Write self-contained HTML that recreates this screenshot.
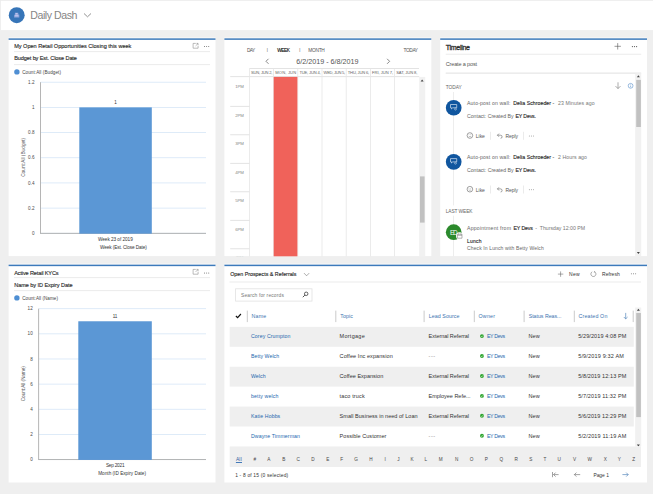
<!DOCTYPE html>
<html><head><meta charset="utf-8"><title>Daily Dash</title>
<style>
*{box-sizing:border-box;margin:0;padding:0}
html,body{width:653px;height:494px;overflow:hidden;background:#efefef;font-family:"Liberation Sans",sans-serif;color:#333}
.t{position:absolute;white-space:pre;line-height:1}
svg{position:absolute;overflow:visible}
</style></head><body>
<svg style="left:0;top:0" width="653" height="494" viewBox="0 0 653 494" font-family="Liberation Sans, sans-serif" xml:space="preserve">
<rect x="0.00" y="0.00" width="653.00" height="30.10" fill="#fff" />
<rect x="0.00" y="0.00" width="653.00" height="0.80" fill="#ececec" />
<rect x="0.00" y="0.00" width="0.80" height="30.00" fill="#ececec" />
<rect x="8.75" y="7.25" width="15.90" height="15.90" fill="#3775b8" rx="7.95" />
<g transform="translate(12.70,11.20)"><path d="M2.2 1.6H5.6V3.4H6.6V6.2H1.4V3.6H2.2Z" fill="#aeb4e8" opacity="0.75"/><path d="M3 2.6H4.8M2.4 4.6H5.6" stroke="#e8e4fa" stroke-width="0.7" fill="none"/></g>
<g transform="translate(83.00,12.50)"><path d="M1 1 L4.5 4.3 L8 1" fill="none" stroke="#777" stroke-width="0.8"/></g>
<rect x="8.60" y="37.10" width="206.90" height="2.00" fill="#f6f6f6" />
<rect x="8.60" y="38.30" width="206.90" height="217.80" fill="#fff" />
<rect x="8.60" y="38.35" width="206.90" height="1.50" fill="#3d7abb" />
<rect x="224.40" y="37.10" width="206.90" height="2.00" fill="#f6f6f6" />
<rect x="224.40" y="38.30" width="206.90" height="217.80" fill="#fff" />
<rect x="224.40" y="38.35" width="206.90" height="1.50" fill="#3d7abb" />
<rect x="440.20" y="37.10" width="206.80" height="2.00" fill="#f6f6f6" />
<rect x="440.20" y="38.30" width="206.80" height="217.80" fill="#fff" />
<rect x="440.20" y="38.35" width="206.80" height="1.50" fill="#3d7abb" />
<rect x="8.60" y="263.30" width="206.90" height="2.00" fill="#f6f6f6" />
<rect x="8.60" y="264.50" width="206.90" height="218.00" fill="#fff" />
<rect x="8.60" y="264.65" width="206.90" height="1.50" fill="#3d7abb" />
<rect x="224.40" y="263.30" width="422.60" height="2.00" fill="#f6f6f6" />
<rect x="224.40" y="264.50" width="422.60" height="218.00" fill="#fff" />
<rect x="224.40" y="264.65" width="422.60" height="1.50" fill="#3d7abb" />
<g transform="translate(192.60,42.90)"><path d="M3.2 0.5H0.5V5.3H5.5V2.8M3 3L5.4 0.6M3.9 0.5H5.5V2.1" fill="none" stroke="#858585" stroke-width="0.55"/></g>
<g transform="translate(203.60,45.50)"><circle cx="0.8999999999999999" cy="1" r="0.55" fill="#777"/><circle cx="3" cy="1" r="0.55" fill="#777"/><circle cx="5.1" cy="1" r="0.55" fill="#777"/></g>
<rect x="14.00" y="51.30" width="196.00" height="0.80" fill="#e6e6e6" />
<rect x="14.00" y="64.30" width="196.00" height="0.80" fill="#e6e6e6" />
<rect x="14.20" y="69.20" width="5.40" height="5.40" fill="#4f8fd3" rx="2.70" />
<rect x="40.50" y="81.80" width="165.50" height="0.80" fill="#d6e6f7" />
<rect x="40.50" y="106.98" width="165.50" height="0.80" fill="#d6e6f7" />
<rect x="40.50" y="132.16" width="165.50" height="0.80" fill="#d6e6f7" />
<rect x="40.50" y="157.34" width="165.50" height="0.80" fill="#d6e6f7" />
<rect x="40.50" y="182.52" width="165.50" height="0.80" fill="#d6e6f7" />
<rect x="40.50" y="207.70" width="165.50" height="0.80" fill="#d6e6f7" />
<rect x="40.50" y="232.88" width="165.50" height="0.80" fill="#d6e6f7" />
<rect x="40.00" y="82.20" width="0.90" height="151.08" fill="#adadad" />
<rect x="40.00" y="232.88" width="166.00" height="0.90" fill="#adadad" />
<rect x="79.30" y="107.38" width="72.50" height="126.30" fill="#5b97d5" />
<g transform="translate(192.60,268.90)"><path d="M3.2 0.5H0.5V5.3H5.5V2.8M3 3L5.4 0.6M3.9 0.5H5.5V2.1" fill="none" stroke="#858585" stroke-width="0.55"/></g>
<g transform="translate(203.60,272.00)"><circle cx="0.8999999999999999" cy="1" r="0.55" fill="#777"/><circle cx="3" cy="1" r="0.55" fill="#777"/><circle cx="5.1" cy="1" r="0.55" fill="#777"/></g>
<rect x="14.00" y="277.30" width="196.00" height="0.80" fill="#e6e6e6" />
<rect x="14.00" y="290.30" width="196.00" height="0.80" fill="#e6e6e6" />
<rect x="14.20" y="295.20" width="5.40" height="5.40" fill="#4f8fd3" rx="2.70" />
<rect x="38.70" y="308.30" width="167.30" height="0.80" fill="#d6e6f7" />
<rect x="38.70" y="333.44" width="167.30" height="0.80" fill="#d6e6f7" />
<rect x="38.70" y="358.58" width="167.30" height="0.80" fill="#d6e6f7" />
<rect x="38.70" y="383.72" width="167.30" height="0.80" fill="#d6e6f7" />
<rect x="38.70" y="408.86" width="167.30" height="0.80" fill="#d6e6f7" />
<rect x="38.70" y="434.00" width="167.30" height="0.80" fill="#d6e6f7" />
<rect x="38.70" y="459.14" width="167.30" height="0.80" fill="#d6e6f7" />
<rect x="38.20" y="308.70" width="0.90" height="150.84" fill="#adadad" />
<rect x="38.20" y="459.14" width="167.80" height="0.90" fill="#adadad" />
<rect x="78.30" y="321.27" width="73.50" height="138.67" fill="#5b97d5" />
<g transform="translate(265.20,58.30)"><path d="M3.3 0.5L0.8 3L3.3 5.5" fill="none" stroke="#555" stroke-width="0.7"/></g>
<g transform="translate(386.40,58.30)"><path d="M0.7 0.5L3.2 3L0.7 5.5" fill="none" stroke="#555" stroke-width="0.7"/></g>
<rect x="249.40" y="68.20" width="169.60" height="0.80" fill="#dcdcdc" />
<rect x="230.20" y="76.30" width="189.00" height="0.80" fill="#dcdcdc" />
<rect x="249.00" y="68.60" width="0.80" height="187.70" fill="#e6e6e6" />
<rect x="273.20" y="68.60" width="0.80" height="187.70" fill="#e6e6e6" />
<rect x="297.40" y="68.60" width="0.80" height="187.70" fill="#e6e6e6" />
<rect x="321.60" y="68.60" width="0.80" height="187.70" fill="#e6e6e6" />
<rect x="345.80" y="68.60" width="0.80" height="187.70" fill="#e6e6e6" />
<rect x="370.00" y="68.60" width="0.80" height="187.70" fill="#e6e6e6" />
<rect x="394.20" y="68.60" width="0.80" height="187.70" fill="#e6e6e6" />
<rect x="273.70" y="76.90" width="23.70" height="179.40" fill="#f0625a" />
<rect x="230.20" y="105.90" width="19.20" height="0.80" fill="#dcdcdc" />
<rect x="230.20" y="134.40" width="19.20" height="0.80" fill="#dcdcdc" />
<rect x="230.20" y="162.90" width="19.20" height="0.80" fill="#dcdcdc" />
<rect x="230.20" y="191.40" width="19.20" height="0.80" fill="#dcdcdc" />
<rect x="230.20" y="219.90" width="19.20" height="0.80" fill="#dcdcdc" />
<rect x="230.20" y="248.40" width="19.20" height="0.80" fill="#dcdcdc" />
<clipPath id="c7"><rect x="230" y="250" width="20" height="6.3"/></clipPath><g clip-path="url(#c7)"><text x="235.4" y="259" font-size="4" fill="#999" letter-spacing="-0.1">7PM</text></g>
<rect x="419.20" y="76.90" width="6.00" height="179.40" fill="#f1f1f1" />
<rect x="420.00" y="176.40" width="4.60" height="46.20" fill="#c1c1c1" />
<g transform="translate(420.60,79.40)"><path d="M0 2L1.5 0L3 2Z" fill="#444"/></g>
<g transform="translate(614.20,42.80)"><path d="M3.5 0.3V6.7M0.3 3.5H6.7" stroke="#555" stroke-width="0.6" fill="none"/></g>
<g transform="translate(631.50,45.60)"><circle cx="0.8999999999999999" cy="1" r="0.6" fill="#555"/><circle cx="3" cy="1" r="0.6" fill="#555"/><circle cx="5.1" cy="1" r="0.6" fill="#555"/></g>
<rect x="445.70" y="53.80" width="195.50" height="0.80" fill="#e6e6e6" />
<rect x="445.70" y="72.40" width="195.50" height="1.60" fill="#ececec" />
<g transform="translate(615.00,82.00)"><path d="M3 0.3V6.5M0.5 4.1L3 6.6L5.5 4.1" stroke="#666" stroke-width="0.55" fill="none"/></g>
<g transform="translate(627.60,82.80)"><circle cx="3" cy="3" r="2.4" fill="none" stroke="#4a84c4" stroke-width="0.55"/><path d="M3 2.7V4.4M3 1.6V2.1" stroke="#4a84c4" stroke-width="0.55"/></g>
<rect x="635.20" y="73.50" width="6.00" height="182.80" fill="#f1f1f1" />
<rect x="636.20" y="79.90" width="4.70" height="47.10" fill="#c1c1c1" />
<g transform="translate(636.90,75.20)"><path d="M0 2L1.5 0L3 2Z" fill="#444"/></g>
<g transform="translate(636.90,252.00)"><path d="M0 0L1.5 2L3 0Z" fill="#444"/></g>
<rect x="453.10" y="92.00" width="0.80" height="164.30" fill="#e9e9e9" />
<rect x="445.00" y="205.40" width="20.00" height="10.20" fill="#fff" />
<rect x="445.85" y="99.90" width="15.70" height="15.70" fill="#10569f" rx="7.85" />
<g transform="translate(450.10,103.90)"><path d="M0.4 0.6H6.6V3.9H2.6L1.4 5V3.9H0.4Z" fill="none" stroke="#e6eef8" stroke-width="0.65"/><circle cx="5.4" cy="5.2" r="0.95" fill="#10569f" stroke="#e6eef8" stroke-width="0.5"/></g>
<g transform="translate(466.90,132.50)"><circle cx="3" cy="3" r="2.8" fill="none" stroke="#555" stroke-width="0.55"/><path d="M1.8 3.6Q3 4.8 4.2 3.6" fill="none" stroke="#666" stroke-width="0.4"/><circle cx="2.1" cy="2.3" r="0.3" fill="#666"/><circle cx="3.9" cy="2.3" r="0.3" fill="#666"/></g>
<rect x="490.00" y="131.80" width="0.70" height="8.00" fill="#e3e3e3" />
<g transform="translate(496.80,133.00)"><path d="M2.2 0.6L0.6 2.2L2.2 3.8M0.7 2.2H3.6Q5.3 2.2 5.3 3.8Q5.3 5.3 3.8 5.3" fill="none" stroke="#555" stroke-width="0.55"/></g>
<rect x="523.00" y="131.80" width="0.70" height="8.00" fill="#e3e3e3" />
<g transform="translate(528.40,135.00)"><circle cx="0.8999999999999999" cy="1" r="0.45" fill="#666"/><circle cx="3" cy="1" r="0.45" fill="#666"/><circle cx="5.1" cy="1" r="0.45" fill="#666"/></g>
<rect x="445.85" y="154.00" width="15.70" height="15.70" fill="#10569f" rx="7.85" />
<g transform="translate(450.10,158.00)"><path d="M0.4 0.6H6.6V3.9H2.6L1.4 5V3.9H0.4Z" fill="none" stroke="#e6eef8" stroke-width="0.65"/><circle cx="5.4" cy="5.2" r="0.95" fill="#10569f" stroke="#e6eef8" stroke-width="0.5"/></g>
<g transform="translate(466.90,186.20)"><circle cx="3" cy="3" r="2.8" fill="none" stroke="#555" stroke-width="0.55"/><path d="M1.8 3.6Q3 4.8 4.2 3.6" fill="none" stroke="#666" stroke-width="0.4"/><circle cx="2.1" cy="2.3" r="0.3" fill="#666"/><circle cx="3.9" cy="2.3" r="0.3" fill="#666"/></g>
<rect x="490.00" y="185.50" width="0.70" height="8.00" fill="#e3e3e3" />
<g transform="translate(496.80,186.70)"><path d="M2.2 0.6L0.6 2.2L2.2 3.8M0.7 2.2H3.6Q5.3 2.2 5.3 3.8Q5.3 5.3 3.8 5.3" fill="none" stroke="#555" stroke-width="0.55"/></g>
<rect x="523.00" y="185.50" width="0.70" height="8.00" fill="#e3e3e3" />
<g transform="translate(528.40,188.70)"><circle cx="0.8999999999999999" cy="1" r="0.45" fill="#666"/><circle cx="3" cy="1" r="0.45" fill="#666"/><circle cx="5.1" cy="1" r="0.45" fill="#666"/></g>
<rect x="445.85" y="224.35" width="15.70" height="15.70" fill="#2c8a2c" rx="7.85" />
<rect x="456.00" y="232.30" width="7.20" height="7.20" fill="#fff" rx="3.60" />
<g transform="translate(457.00,233.30)"><path d="M0.4 0.9H5V4.9H0.4ZM0.4 2H5M1.5 0.2V1.2M3.9 0.2V1.2" fill="none" stroke="#6a6a6a" stroke-width="0.5"/></g>
<g transform="translate(303.60,272.60)"><path d="M0.4 0.5L3 3.2L5.6 0.5" fill="none" stroke="#666" stroke-width="0.55"/></g>
<g transform="translate(557.60,271.10)"><path d="M3 0.3V5.7M0.3 3H5.7" stroke="#555" stroke-width="0.5" fill="none"/></g>
<g transform="translate(590.40,270.90)"><path d="M4.2 0.9A2.5 2.5 0 1 1 1.8 0.9" fill="none" stroke="#555" stroke-width="0.5"/><path d="M3.6 0.2L4.4 0.9L3.8 1.8" fill="none" stroke="#555" stroke-width="0.45"/></g>
<g transform="translate(630.50,272.80)"><circle cx="0.8999999999999999" cy="1" r="0.5" fill="#777"/><circle cx="3" cy="1" r="0.5" fill="#777"/><circle cx="5.1" cy="1" r="0.5" fill="#777"/></g>
<rect x="229.50" y="281.60" width="411.50" height="0.80" fill="#e6e6e6" />
<rect x="235.60" y="288.80" width="76.40" height="12.30" fill="#fff" stroke="#e1e1e1" stroke-width="0.8"/>
<g transform="translate(302.40,291.60)"><circle cx="3.8" cy="2.2" r="1.75" fill="none" stroke="#333" stroke-width="0.75"/><path d="M2.5 3.5L0.4 5.6" stroke="#333" stroke-width="0.85"/></g>
<g transform="translate(235.40,313.40)"><path d="M0.5 2.6L2.2 4.3L5.5 0.6" fill="none" stroke="#111" stroke-width="1.15"/></g>
<rect x="246.80" y="310.60" width="1.00" height="11.50" fill="#cbcbcb" />
<rect x="335.30" y="310.60" width="1.00" height="11.50" fill="#cbcbcb" />
<rect x="423.60" y="310.60" width="1.00" height="11.50" fill="#cbcbcb" />
<rect x="473.80" y="310.60" width="1.00" height="11.50" fill="#cbcbcb" />
<rect x="523.60" y="310.60" width="1.00" height="11.50" fill="#cbcbcb" />
<rect x="573.80" y="310.60" width="1.00" height="11.50" fill="#cbcbcb" />
<rect x="632.70" y="310.60" width="1.00" height="11.50" fill="#cbcbcb" />
<g transform="translate(623.20,312.60)"><path d="M2.5 0.3V6.2M0.6 4.4L2.5 6.3L4.4 4.4" stroke="#3b73b0" stroke-width="0.6" fill="none"/></g>
<rect x="229.70" y="326.85" width="404.10" height="19.93" fill="#efefef" />
<rect x="480.00" y="334.15" width="3.90" height="3.90" fill="#2fa52f" rx="1.95" />
<g transform="translate(480.00,334.15)"><path d="M1.1 2L1.8 2.7L3 1.4" fill="none" stroke="#fff" stroke-width="0.5"/></g>
<rect x="480.00" y="354.08" width="3.90" height="3.90" fill="#2fa52f" rx="1.95" />
<g transform="translate(480.00,354.08)"><path d="M1.1 2L1.8 2.7L3 1.4" fill="none" stroke="#fff" stroke-width="0.5"/></g>
<rect x="229.70" y="366.71" width="404.10" height="19.93" fill="#efefef" />
<rect x="480.00" y="374.01" width="3.90" height="3.90" fill="#2fa52f" rx="1.95" />
<g transform="translate(480.00,374.01)"><path d="M1.1 2L1.8 2.7L3 1.4" fill="none" stroke="#fff" stroke-width="0.5"/></g>
<rect x="480.00" y="393.94" width="3.90" height="3.90" fill="#2fa52f" rx="1.95" />
<g transform="translate(480.00,393.94)"><path d="M1.1 2L1.8 2.7L3 1.4" fill="none" stroke="#fff" stroke-width="0.5"/></g>
<rect x="229.70" y="406.57" width="404.10" height="19.93" fill="#efefef" />
<rect x="480.00" y="413.87" width="3.90" height="3.90" fill="#2fa52f" rx="1.95" />
<g transform="translate(480.00,413.87)"><path d="M1.1 2L1.8 2.7L3 1.4" fill="none" stroke="#fff" stroke-width="0.5"/></g>
<rect x="480.00" y="433.80" width="3.90" height="3.90" fill="#2fa52f" rx="1.95" />
<g transform="translate(480.00,433.80)"><path d="M1.1 2L1.8 2.7L3 1.4" fill="none" stroke="#fff" stroke-width="0.5"/></g>
<rect x="635.20" y="307.50" width="6.00" height="139.00" fill="#f1f1f1" />
<rect x="636.20" y="313.00" width="4.70" height="104.10" fill="#c1c1c1" />
<g transform="translate(636.90,308.80)"><path d="M0 2L1.5 0L3 2Z" fill="#444"/></g>
<g transform="translate(636.90,444.60)"><path d="M0 0L1.5 2L3 0Z" fill="#444"/></g>
<rect x="229.70" y="446.45" width="411.30" height="20.50" fill="#efefef" />
<rect x="235.90" y="462.00" width="6.10" height="0.90" fill="#2f6db3" />
<g transform="translate(552.00,471.60)"><path d="M0.5 0.4V5.6M1.6 3H6.6M3.6 1L1.6 3L3.6 5" fill="none" stroke="#555" stroke-width="0.55"/></g>
<g transform="translate(573.80,471.60)"><path d="M0.6 3H6.4M2.6 1L0.6 3L2.6 5" fill="none" stroke="#555" stroke-width="0.55"/></g>
<g transform="translate(621.80,471.60)"><path d="M0.6 3H6.4M4.4 1L6.4 3L4.4 5" fill="none" stroke="#3b73b0" stroke-width="0.6"/></g>
<text font-size="10.6" fill="#858585" letter-spacing="-0.453" x="30.30" y="19">Daily Dash</text>
<text font-size="5.6" fill="#2a2a2a" stroke="#2a2a2a" stroke-width="0.13" letter-spacing="-0.028" x="14.20" y="48">My Open Retail Opportunities Closing this week</text>
<text font-size="5.6" fill="#2a2a2a" stroke="#2a2a2a" stroke-width="0.13" letter-spacing="-0.120" x="14.20" y="60">Budget by Est. Close Date</text>
<text font-size="4.6" fill="#444" letter-spacing="0.070" x="22.20" y="74">Count:All (Budget)</text>
<text font-size="4.6" fill="#4a4a4a" x="28.11" y="84">1.2</text>
<text font-size="4.6" fill="#4a4a4a" x="31.94" y="109">1</text>
<text font-size="4.6" fill="#4a4a4a" x="28.11" y="134">0.8</text>
<text font-size="4.6" fill="#4a4a4a" x="28.11" y="159">0.6</text>
<text font-size="4.6" fill="#4a4a4a" x="28.11" y="185">0.4</text>
<text font-size="4.6" fill="#4a4a4a" x="28.11" y="210">0.2</text>
<text font-size="4.6" fill="#4a4a4a" x="31.94" y="235">0</text>
<text font-size="4.6" fill="#333" x="114.27" y="104">1</text>
<text font-size="4.7" fill="#333" letter-spacing="-0.044" x="98.00" y="241">Week 23 of 2019</text>
<text font-size="4.7" fill="#333" letter-spacing="-0.104" x="100.00" y="249">Week (Est. Close Date)</text>
<text font-size="4.8" fill="#5a5a5a" letter-spacing="-0.011" transform="rotate(-90 23.90 157.34)" x="4.40" y="158.92">Count:All (Budget)</text>
<text font-size="5.6" fill="#2a2a2a" stroke="#2a2a2a" stroke-width="0.13" letter-spacing="-0.147" x="14.20" y="275">Active Retail KYCs</text>
<text font-size="5.6" fill="#2a2a2a" stroke="#2a2a2a" stroke-width="0.13" letter-spacing="-0.077" x="14.20" y="287">Name by ID Expiry Date</text>
<text font-size="4.6" fill="#444" letter-spacing="0.035" x="22.20" y="300">Count:All (Name)</text>
<text font-size="4.6" fill="#4a4a4a" x="27.58" y="310">12</text>
<text font-size="4.6" fill="#4a4a4a" x="27.58" y="335">10</text>
<text font-size="4.6" fill="#4a4a4a" x="30.14" y="361">8</text>
<text font-size="4.6" fill="#4a4a4a" x="30.14" y="386">6</text>
<text font-size="4.6" fill="#4a4a4a" x="30.14" y="411">4</text>
<text font-size="4.6" fill="#4a4a4a" x="30.14" y="436">2</text>
<text font-size="4.6" fill="#4a4a4a" x="30.14" y="461">0</text>
<text font-size="4.6" fill="#333" x="112.66" y="318">11</text>
<text font-size="4.7" fill="#333" letter-spacing="-0.210" x="105.90" y="467">Sep 2021</text>
<text font-size="4.7" fill="#333" letter-spacing="0.006" x="98.20" y="475">Month (ID Expiry Date)</text>
<text font-size="4.8" fill="#5a5a5a" letter-spacing="-0.112" transform="rotate(-90 23.90 383.72)" x="6.40" y="385.30">Count:All (Name)</text>
<text font-size="4.8" fill="#555" letter-spacing="-0.705" x="247.00" y="52">DAY</text>
<text font-size="4.2" fill="#444" x="266.70" y="51">|</text>
<text font-size="4.8" fill="#111" stroke="#111" stroke-width="0.13" letter-spacing="-0.485" x="277.30" y="52">WEEK</text>
<text font-size="4.2" fill="#444" x="299.30" y="51">|</text>
<text font-size="4.8" fill="#555" letter-spacing="-0.279" x="308.30" y="52">MONTH</text>
<text font-size="4.8" fill="#555" letter-spacing="-0.419" x="403.60" y="52">TODAY</text>
<text font-size="7.2" fill="#555" letter-spacing="-0.002" x="296.20" y="64">6/2/2019 - 6/8/2019</text>
<text font-size="4.1" fill="#666" letter-spacing="-0.203" x="251.00" y="74">SUN, JUN 2,</text>
<text font-size="4.1" fill="#666" letter-spacing="0.175" x="275.20" y="74">MON, JUN</text>
<text font-size="4.1" fill="#666" letter-spacing="-0.162" x="299.40" y="74">TUE, JUN 4,</text>
<text font-size="4.1" fill="#666" letter-spacing="-0.286" x="323.60" y="74">WED, JUN 5,</text>
<text font-size="4.1" fill="#666" letter-spacing="-0.182" x="347.80" y="74">THU, JUN 6,</text>
<text font-size="4.1" fill="#666" letter-spacing="-0.017" x="372.00" y="74">FRI, JUN 7,</text>
<text font-size="4.1" fill="#666" letter-spacing="-0.073" x="396.20" y="74">SAT, JUN 8,</text>
<text font-size="4.3" fill="#888" letter-spacing="-0.115" x="235.20" y="88">1PM</text>
<text font-size="4.3" fill="#888" letter-spacing="-0.115" x="235.20" y="117">2PM</text>
<text font-size="4.3" fill="#888" letter-spacing="-0.115" x="235.20" y="145">3PM</text>
<text font-size="4.3" fill="#888" letter-spacing="-0.115" x="235.20" y="174">4PM</text>
<text font-size="4.3" fill="#888" letter-spacing="-0.115" x="235.20" y="202">5PM</text>
<text font-size="4.3" fill="#888" letter-spacing="-0.115" x="235.20" y="231">6PM</text>
<text font-size="7" fill="#2a2a2a" stroke="#2a2a2a" stroke-width="0.28" letter-spacing="-0.275" x="445.70" y="50">Timeline</text>
<text font-size="5.5" fill="#555" letter-spacing="-0.141" x="445.70" y="66">Create a post</text>
<text font-size="4.8" fill="#666" letter-spacing="-0.019" x="445.70" y="89">TODAY</text>
<text font-size="5.2" fill="#666" letter-spacing="0.126" x="467.00" y="105">Auto-post on wall:</text>
<text font-size="5.2" fill="#2a2a2a" stroke="#2a2a2a" stroke-width="0.13" letter-spacing="0.043" x="513.20" y="105">Delia Schroeder -</text>
<text font-size="5.2" fill="#777" letter-spacing="0.087" x="558.00" y="105">23 Minutes ago</text>
<text font-size="5.2" fill="#666" letter-spacing="-0.012" x="467.00" y="118">Contact: Created By</text>
<text font-size="5.2" fill="#2a2a2a" stroke="#2a2a2a" stroke-width="0.13" letter-spacing="-0.154" x="515.50" y="118">EY Devs.</text>
<text font-size="5" fill="#555" letter-spacing="-0.022" x="475.80" y="138">Like</text>
<text font-size="5" fill="#555" letter-spacing="-0.059" x="505.40" y="138">Reply</text>
<text font-size="5.2" fill="#666" letter-spacing="0.126" x="467.00" y="159">Auto-post on wall:</text>
<text font-size="5.2" fill="#2a2a2a" stroke="#2a2a2a" stroke-width="0.13" letter-spacing="0.043" x="513.20" y="159">Delia Schroeder -</text>
<text font-size="5.2" fill="#777" letter-spacing="0.067" x="558.00" y="159">2 Hours ago</text>
<text font-size="5.2" fill="#666" letter-spacing="-0.012" x="467.00" y="172">Contact: Created By</text>
<text font-size="5.2" fill="#2a2a2a" stroke="#2a2a2a" stroke-width="0.13" letter-spacing="-0.154" x="515.50" y="172">EY Devs.</text>
<text font-size="5" fill="#555" letter-spacing="-0.022" x="475.80" y="192">Like</text>
<text font-size="5" fill="#555" letter-spacing="-0.059" x="505.40" y="192">Reply</text>
<text font-size="4.8" fill="#666" letter-spacing="-0.075" x="445.70" y="213">LAST WEEK</text>
<text font-size="6.4" fill="#f4faf4" letter-spacing="-1.145" x="449.90" y="235">ED</text>
<text font-size="5.2" fill="#666" letter-spacing="0.203" x="467.00" y="230">Appointment from</text>
<text font-size="5.2" fill="#2a2a2a" stroke="#2a2a2a" stroke-width="0.13" letter-spacing="-0.128" x="513.50" y="230">EY Devs</text>
<text font-size="5.2" fill="#666" x="535.30" y="230">-</text>
<text font-size="5.2" fill="#777" letter-spacing="-0.005" x="539.80" y="230">Thursday 12:00 PM</text>
<text font-size="5" fill="#2a2a2a" stroke="#2a2a2a" stroke-width="0.13" letter-spacing="0.255" x="467.00" y="243">Lunch</text>
<text font-size="5" fill="#666" letter-spacing="0.126" x="467.00" y="250">Check In Lunch with Betty Welch</text>
<text font-size="5.3" fill="#2a2a2a" stroke="#2a2a2a" stroke-width="0.13" letter-spacing="0.013" x="230.20" y="276">Open Prospects &amp; Referrals</text>
<text font-size="5" fill="#333" letter-spacing="0.261" x="569.10" y="276">New</text>
<text font-size="5" fill="#333" letter-spacing="0.012" x="602.10" y="276">Refresh</text>
<text font-size="4.9" fill="#777" letter-spacing="0.154" x="241.00" y="297">Search for records</text>
<text font-size="5.3" fill="#3b73b0" letter-spacing="0.265" x="251.40" y="318">Name</text>
<text font-size="5.3" fill="#3b73b0" letter-spacing="0.085" x="340.30" y="318">Topic</text>
<text font-size="5.3" fill="#3b73b0" letter-spacing="0.059" x="428.80" y="318">Lead Source</text>
<text font-size="5.3" fill="#3b73b0" letter-spacing="0.238" x="478.50" y="318">Owner</text>
<text font-size="5.3" fill="#3b73b0" letter-spacing="-0.042" x="528.70" y="318">Status Reas...</text>
<text font-size="5.3" fill="#3b73b0" letter-spacing="0.151" x="578.60" y="318">Created On</text>
<text font-size="5.2" fill="#2467ae" letter-spacing="0.103" x="251.00" y="338">Corey Crumpton</text>
<text font-size="5.5" fill="#333" letter-spacing="0.269" x="339.60" y="338">Mortgage</text>
<text font-size="5.5" fill="#333" letter-spacing="-0.052" x="428.60" y="338">External Referral</text>
<text font-size="5.2" fill="#2467ae" letter-spacing="-0.313" x="486.90" y="338">EY Devs</text>
<text font-size="5.5" fill="#333" letter-spacing="0.128" x="528.40" y="338">New</text>
<text font-size="5.5" fill="#333" letter-spacing="0.101" x="578.20" y="338">5/29/2019 4:08 PM</text>
<text font-size="5.2" fill="#2467ae" letter-spacing="0.055" x="251.00" y="358">Betty Welch</text>
<text font-size="5.5" fill="#333" letter-spacing="0.081" x="339.60" y="358">Coffee Inc expansion</text>
<text font-size="5.5" fill="#888" letter-spacing="0.467" x="428.60" y="358">---</text>
<text font-size="5.2" fill="#2467ae" letter-spacing="-0.313" x="486.90" y="358">EY Devs</text>
<text font-size="5.5" fill="#333" letter-spacing="0.128" x="528.40" y="358">New</text>
<text font-size="5.5" fill="#333" letter-spacing="0.167" x="578.20" y="358">5/9/2019 9:32 AM</text>
<text font-size="5.2" fill="#2467ae" letter-spacing="0.054" x="251.00" y="378">Welch</text>
<text font-size="5.5" fill="#333" letter-spacing="0.023" x="339.60" y="378">Coffee Expansion</text>
<text font-size="5.5" fill="#333" letter-spacing="-0.052" x="428.60" y="378">External Referral</text>
<text font-size="5.2" fill="#2467ae" letter-spacing="-0.313" x="486.90" y="378">EY Devs</text>
<text font-size="5.5" fill="#333" letter-spacing="0.128" x="528.40" y="378">New</text>
<text font-size="5.5" fill="#333" letter-spacing="0.101" x="578.20" y="378">5/8/2019 12:13 PM</text>
<text font-size="5.2" fill="#2467ae" letter-spacing="0.141" x="251.00" y="398">betty welch</text>
<text font-size="5.5" fill="#333" letter-spacing="0.136" x="339.60" y="398">taco truck</text>
<text font-size="5.5" fill="#333" letter-spacing="-0.018" x="428.60" y="398">Employee Refe...</text>
<text font-size="5.2" fill="#2467ae" letter-spacing="-0.313" x="486.90" y="398">EY Devs</text>
<text font-size="5.5" fill="#333" letter-spacing="0.128" x="528.40" y="398">New</text>
<text font-size="5.5" fill="#333" letter-spacing="0.125" x="578.20" y="398">5/7/2019 11:32 PM</text>
<text font-size="5.2" fill="#2467ae" letter-spacing="0.094" x="251.00" y="418">Katie Hobbs</text>
<text font-size="5.5" fill="#333" letter-spacing="0.031" x="339.60" y="418">Small Business in need of Loan</text>
<text font-size="5.5" fill="#333" letter-spacing="-0.052" x="428.60" y="418">External Referral</text>
<text font-size="5.2" fill="#2467ae" letter-spacing="-0.313" x="486.90" y="418">EY Devs</text>
<text font-size="5.5" fill="#333" letter-spacing="0.128" x="528.40" y="418">New</text>
<text font-size="5.5" fill="#333" letter-spacing="0.101" x="578.20" y="418">5/6/2019 12:29 PM</text>
<text font-size="5.2" fill="#2467ae" letter-spacing="0.089" x="251.00" y="438">Dwayne Timmerman</text>
<text font-size="5.5" fill="#333" letter-spacing="0.037" x="339.60" y="438">Possible Customer</text>
<text font-size="5.5" fill="#888" letter-spacing="0.467" x="428.60" y="438">---</text>
<text font-size="5.2" fill="#2467ae" letter-spacing="-0.313" x="486.90" y="438">EY Devs</text>
<text font-size="5.5" fill="#333" letter-spacing="0.128" x="528.40" y="438">New</text>
<text font-size="5.5" fill="#333" letter-spacing="0.142" x="578.20" y="438">5/2/2019 11:19 AM</text>
<text font-size="4.9" fill="#2f5f9e" letter-spacing="0.221" x="235.90" y="461">All</text>
<text font-size="4.7" fill="#484848" x="253.50" y="461">#</text>
<text font-size="4.7" fill="#484848" x="267.33" y="461">A</text>
<text font-size="4.7" fill="#484848" x="282.13" y="461">B</text>
<text font-size="4.7" fill="#484848" x="296.50" y="461">C</text>
<text font-size="4.7" fill="#484848" x="311.30" y="461">D</text>
<text font-size="4.7" fill="#484848" x="326.33" y="461">E</text>
<text font-size="4.7" fill="#484848" x="340.26" y="461">F</text>
<text font-size="4.7" fill="#484848" x="354.37" y="461">G</text>
<text font-size="4.7" fill="#484848" x="369.30" y="461">H</text>
<text font-size="4.7" fill="#484848" x="384.44" y="461">I</text>
<text font-size="4.7" fill="#484848" x="397.13" y="461">J</text>
<text font-size="4.7" fill="#484848" x="410.53" y="461">K</text>
<text font-size="4.7" fill="#484848" x="424.60" y="461">L</text>
<text font-size="4.7" fill="#484848" x="438.75" y="461">M</text>
<text font-size="4.7" fill="#484848" x="454.90" y="461">N</text>
<text font-size="4.7" fill="#484848" x="469.87" y="461">O</text>
<text font-size="4.7" fill="#484848" x="484.63" y="461">P</text>
<text font-size="4.7" fill="#484848" x="499.57" y="461">Q</text>
<text font-size="4.7" fill="#484848" x="514.50" y="461">R</text>
<text font-size="4.7" fill="#484848" x="529.13" y="461">S</text>
<text font-size="4.7" fill="#484848" x="543.46" y="461">T</text>
<text font-size="4.7" fill="#484848" x="557.60" y="461">U</text>
<text font-size="4.7" fill="#484848" x="572.93" y="461">V</text>
<text font-size="4.7" fill="#484848" x="587.48" y="461">W</text>
<text font-size="4.7" fill="#484848" x="603.63" y="461">X</text>
<text font-size="4.7" fill="#484848" x="617.73" y="461">Y</text>
<text font-size="4.7" fill="#484848" x="632.36" y="461">Z</text>
<text font-size="4.9" fill="#333" letter-spacing="0.178" x="235.20" y="477">1 - 8 of 15 (0 selected)</text>
<text font-size="4.9" fill="#333" letter-spacing="-0.003" x="593.40" y="477">Page 1</text>
</svg>
</body></html>
